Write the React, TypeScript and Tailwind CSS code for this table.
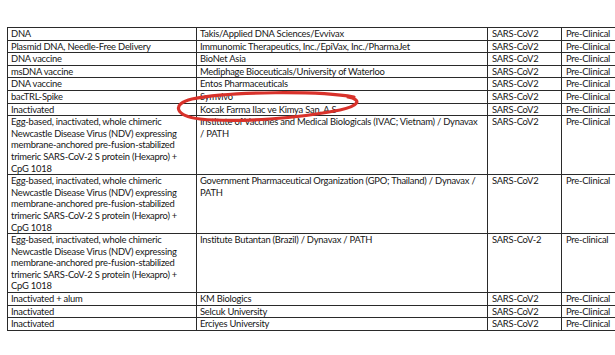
import React from "react";

const egg = [
  "Egg-based, inactivated, whole chimeric",
  "Newcastle Disease Virus (NDV) expressing",
  "membrane-anchored pre-fusion-stabilized",
  "trimeric SARS-CoV-2 S protein (Hexapro) +",
  "CpG 1018",
];

type Row = { a: string[]; b: string[]; c: string; d: string };

const rows: Row[] = [
  { a: ["DNA"], b: ["Takis/Applied DNA Sciences/Evvivax"], c: "SARS-CoV2", d: "Pre-Clinical" },
  { a: ["Plasmid DNA, Needle-Free Delivery"], b: ["Immunomic Therapeutics, Inc./EpiVax, Inc./PharmaJet"], c: "SARS-CoV2", d: "Pre-Clinical" },
  { a: ["DNA vaccine"], b: ["BioNet Asia"], c: "SARS-CoV2", d: "Pre-Clinical" },
  { a: ["msDNA vaccine"], b: ["Mediphage Bioceuticals/University of Waterloo"], c: "SARS-CoV2", d: "Pre-Clinical" },
  { a: ["DNA vaccine"], b: ["Entos Pharmaceuticals"], c: "SARS-CoV2", d: "Pre-Clinical" },
  { a: ["bacTRL-Spike"], b: ["Symvivo"], c: "SARS-CoV2", d: "Pre-Clinical" },
  { a: ["Inactivated"], b: ["Kocak Farma Ilac ve Kimya San. A.S"], c: "SARS-CoV2", d: "Pre-Clinical" },
  { a: egg, b: ["Institute of Vaccines and Medical Biologicals (IVAC; Vietnam) / Dynavax", "/ PATH"], c: "SARS-CoV2", d: "Pre-Clinical" },
  { a: egg, b: ["Government Pharmaceutical Organization (GPO; Thailand) / Dynavax /", "PATH"], c: "SARS-CoV2", d: "Pre-Clinical" },
  { a: egg, b: ["Institute Butantan (Brazil) / Dynavax / PATH"], c: "SARS-CoV-2", d: "Pre-clinical" },
  { a: ["Inactivated + alum"], b: ["KM Biologics"], c: "SARS-CoV2", d: "Pre-Clinical" },
  { a: ["Inactivated"], b: ["Selcuk University"], c: "SARS-CoV2", d: "Pre-Clinical" },
  { a: ["Inactivated"], b: ["Erciyes University"], c: "SARS-CoV2", d: "Pre-Clinical" },
];

function Lines({ lines }: { lines: string[] }) {
  return (
    <>
      {lines.map((l, i) => (
        <div key={i} className="whitespace-nowrap">
          {l}
        </div>
      ))}
    </>
  );
}

export default function App() {
  const cell = "border border-[#2a2a2a] align-top pl-[3px] pr-0 py-0 overflow-hidden";
  return (
    <div
      className="relative w-[615px] h-[355px] overflow-hidden bg-white text-[#161616]"
      style={{ fontFamily: "Lato, 'Open Sans', sans-serif" }}
    >
      <div className="pt-[27px] pl-[7px]">
        <table className="border-collapse table-fixed w-[660px] text-[9.4px] leading-[11.6px] tracking-[-0.22px]">
          <colgroup>
            <col className="w-[189px]" />
            <col className="w-[291px]" />
            <col className="w-[74px]" />
            <col className="w-[106px]" />
          </colgroup>
          <tbody>
            {rows.map((r, i) => (
              <tr key={i}>
                <td className={cell}>
                  <Lines lines={r.a} />
                </td>
                <td className={cell}>
                  <Lines lines={r.b} />
                </td>
                <td className={cell + " pl-[4px]"}>{r.c}</td>
                <td className={cell + " pl-[4px]"}>{r.d}</td>
              </tr>
            ))}
          </tbody>
        </table>
      </div>
      <svg
        className="absolute inset-0 pointer-events-none"
        width="615"
        height="355"
        viewBox="0 0 615 355"
      >
        <path
          d="M 354 97 C 320 91, 232 91, 192 99 C 171 104, 175 116, 200 119 C 240 123, 300 118, 340 110 C 358 106, 363 100, 348 97"
          fill="none"
          stroke="#d8322b"
          strokeWidth="3.2"
          strokeLinecap="round"
        />
      </svg>
    </div>
  );
}
